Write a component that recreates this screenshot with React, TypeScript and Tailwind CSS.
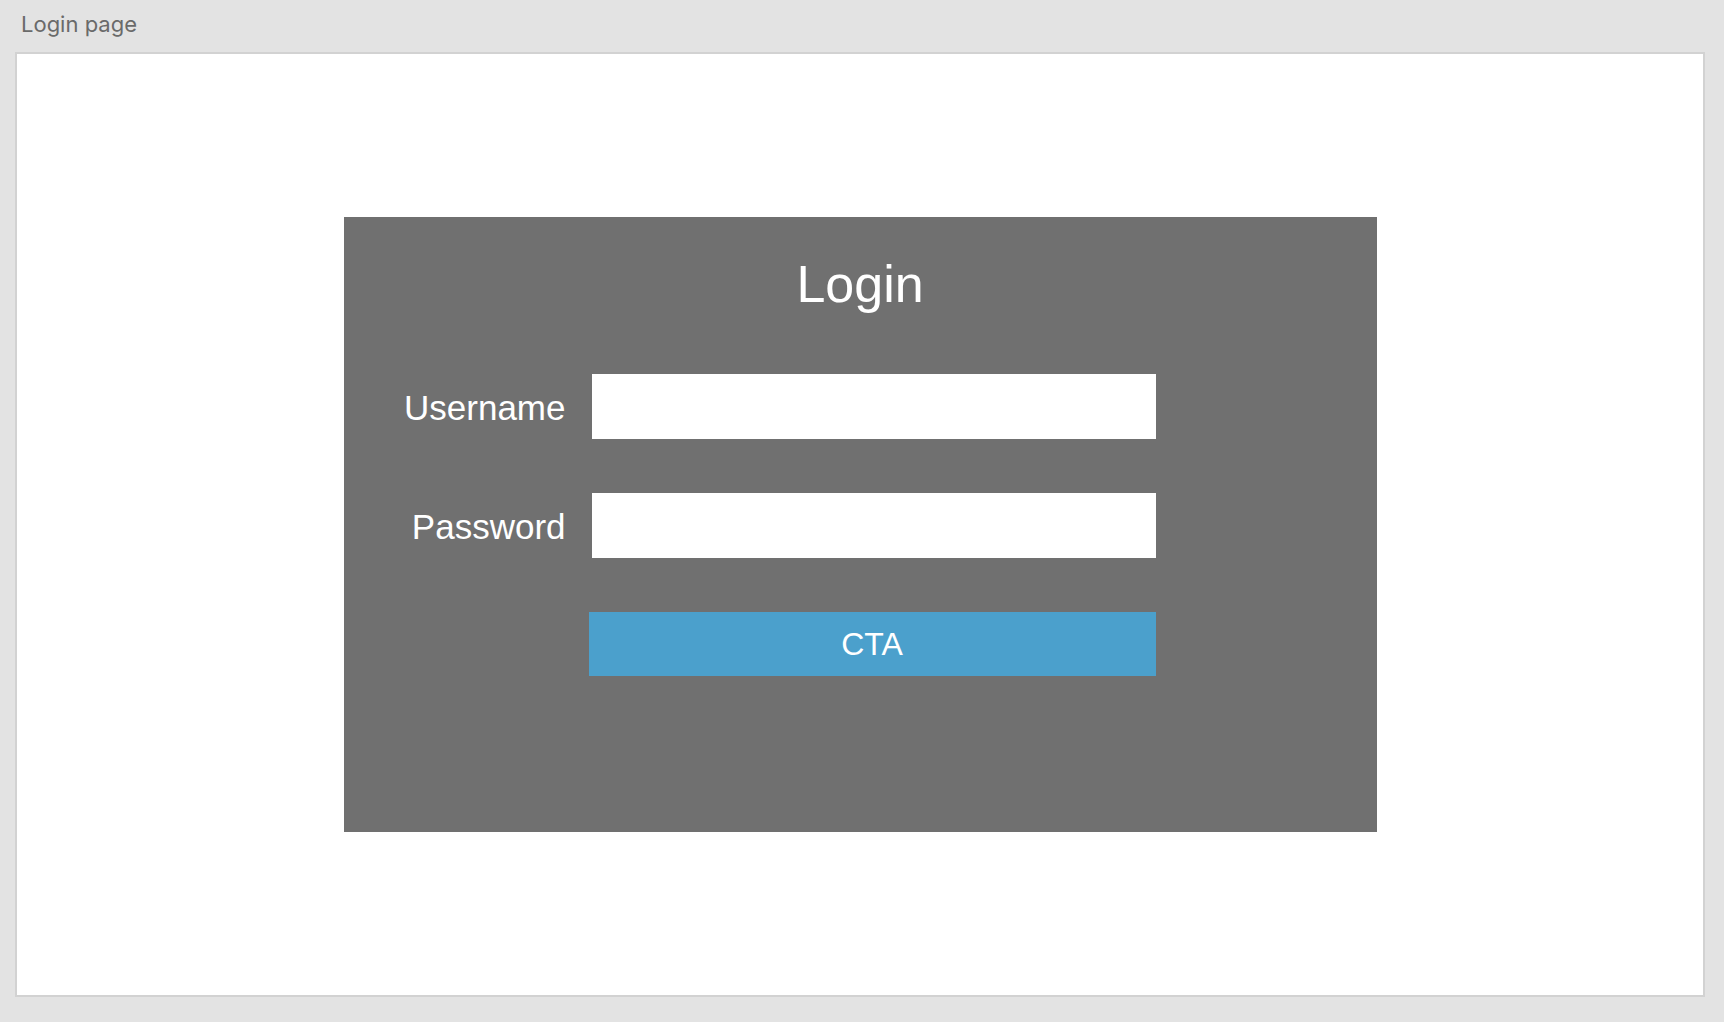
export default function App() {
  return (
    <div className="w-full h-[1022px] bg-[#e3e3e3] flex flex-col font-['Liberation_Sans',Arial,sans-serif]">
      {/* page caption */}
      <div className="pl-[21px] pt-[13px] text-[22px] leading-[22px] text-[#6a6a6a] font-['Inter',sans-serif]">
        Login page
      </div>

      {/* canvas frame */}
      <div className="ml-[15px] mr-[19px] mt-[17px] h-[945px] border-2 border-[#d2d2d2] bg-white flex items-center justify-center">
        <div className="w-[1033px] h-[615px] bg-[#707070] flex flex-col pt-[41px]">
          <h1 className="text-center text-white text-[52px] leading-[52px]">Login</h1>

          <div className="mt-[64px] pl-[40px] flex flex-col gap-[54px]">
            <div className="flex items-center">
              <label className="w-[182px] text-right text-white text-[35px] leading-[35px] pt-[1px]">Username</label>
              <div className="ml-[26px] w-[564px] h-[65px] bg-white" />
            </div>
            <div className="flex items-center">
              <label className="w-[182px] text-right text-white text-[35px] leading-[35px] pt-[1px]">Password</label>
              <div className="ml-[26px] w-[564px] h-[65px] bg-white" />
            </div>
            <div className="flex">
              <button className="ml-[205px] w-[567px] h-[64px] bg-[#4ba0cc] text-white text-[32px] leading-[32px] flex items-center justify-center">
                CTA
              </button>
            </div>
          </div>
        </div>
      </div>
    </div>
  );
}
